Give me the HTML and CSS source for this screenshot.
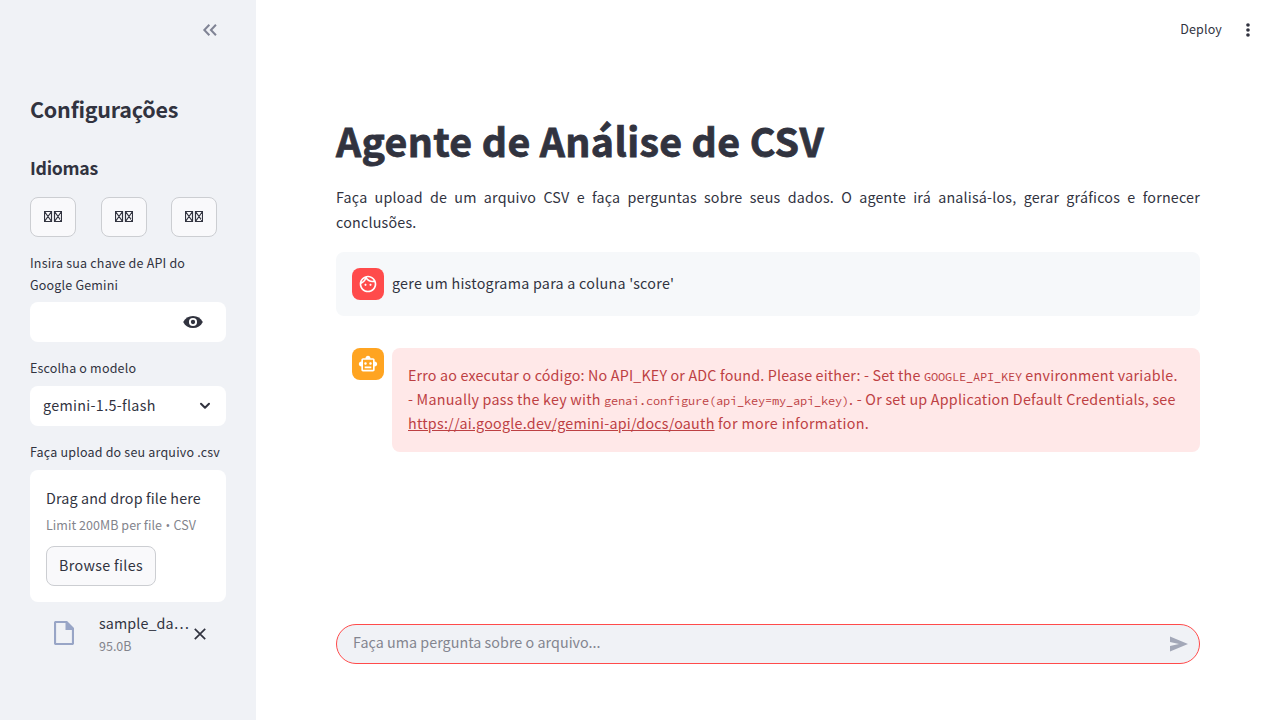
FILE: index.html
```html
<!DOCTYPE html>
<html lang="pt-BR">
<head>
<meta charset="utf-8">
<title>Agente de Análise de CSV</title>
<link rel="stylesheet" href="styles.css">
</head>
<body>
<div class="app">
  <aside class="sidebar">
    <div class="sidebar-header">
      <svg class="collapse" width="22" height="22" viewBox="0 0 24 24" fill="none" stroke="currentColor" stroke-width="2.200"><path d="M11.300 6.200L5.800 12l5.500 5.800M18.500 6.200L13 12l5.500 5.800"/></svg>
    </div>
    <h2 class="side-title">Configurações</h2>
    <h3 class="side-subtitle">Idiomas</h3>
    <div class="langs">
      <button class="btn lang" aria-label="Português"><svg width="18" height="11" viewBox="0 0 18 11" fill="none" stroke="currentColor" stroke-width="1.200"><path d="M.5.500h7v10h-7zM.5.500l7 10M7.500.500l-7 10M10.500.500h7v10h-7zM10.500.500l7 10M17.500.500l-7 10"/></svg></button>
      <button class="btn lang" aria-label="English"><svg width="18" height="11" viewBox="0 0 18 11" fill="none" stroke="currentColor" stroke-width="1.200"><path d="M.5.500h7v10h-7zM.5.500l7 10M7.500.500l-7 10M10.500.500h7v10h-7zM10.500.500l7 10M17.500.500l-7 10"/></svg></button>
      <button class="btn lang" aria-label="Español"><svg width="18" height="11" viewBox="0 0 18 11" fill="none" stroke="currentColor" stroke-width="1.200"><path d="M.5.500h7v10h-7zM.5.500l7 10M7.500.500l-7 10M10.500.500h7v10h-7zM10.500.500l7 10M17.500.500l-7 10"/></svg></button>
    </div>
    <label class="label label-key">Insira sua chave de API do<br>Google Gemini</label>
    <div class="field field-key">
      <svg width="20" height="20" viewBox="0 0 20 20"><path d="M.2 10C2.200 6 5.500 3.900 10 3.900s7.800 2.100 9.800 6.100c-2 4-5.300 6.100-9.800 6.100S2.200 14 .2 10z" fill="currentColor"/><circle cx="10" cy="10" r="3.100" fill="none" stroke="#fff" stroke-width="1.900"/></svg>
    </div>
    <label class="label label-model">Escolha o modelo</label>
    <div class="field field-model">
      <span class="model">gemini-1.5-flash</span>
      <svg width="12" height="8" viewBox="0 0 12 8" fill="none" stroke="currentColor" stroke-width="2" stroke-linecap="round" stroke-linejoin="round"><path d="M2 1.800l4 4 4-4"/></svg>
    </div>
    <label class="label label-upload">Faça upload do seu arquivo .csv</label>
    <div class="dropzone">
      <div class="drop-title">Drag and drop file here</div>
      <div class="drop-hint">Limit 200MB per file <span class="bullet">•</span> CSV</div>
      <button class="btn browse">Browse files</button>
    </div>
    <div class="file">
      <svg class="file-icon" width="20" height="24" viewBox="0 0 20 24"><path d="M2 1H12.500l6.500 6.500v14.500a1 1 0 0 1-1 1h-16a1 1 0 0 1-1-1v-20a1 1 0 0 1 1-1z" fill="none" stroke="currentColor" stroke-width="2.200"/><path d="M11.500 1h1.500l6 6v2h-7.500z" fill="currentColor"/></svg>
      <div class="file-info">
        <div class="file-name">sample_da…</div>
        <div class="file-size">95.0B</div>
      </div>
      <svg class="file-close" width="12" height="12" viewBox="0 0 12 12" fill="none" stroke="currentColor" stroke-width="1.700"><path d="M.8.800l10.400 10.400M11.200.800L.8 11.200"/></svg>
    </div>
  </aside>
  <main class="main">
    <header class="toolbar">
      <span class="deploy">Deploy</span>
      <svg width="20" height="20" viewBox="0 0 24 24" fill="currentColor"><circle cx="12" cy="6" r="2.200"/><circle cx="12" cy="12" r="2.200"/><circle cx="12" cy="18" r="2.200"/></svg>
    </header>
    <section class="content">
      <h1 class="title">Agente de Análise de CSV</h1>
      <p class="intro">Faça upload de um arquivo CSV e faça perguntas sobre seus dados. O agente irá analisá-los, gerar gráficos e fornecer conclusões.</p>
      <div class="message user">
        <div class="avatar avatar-user"><svg width="20" height="20" viewBox="0 0 24 24" fill="currentColor"><path d="M10.250 13c0 .69-.56 1.250-1.250 1.250S7.750 13.690 7.750 13s.56-1.250 1.250-1.250 1.250.56 1.250 1.250zM15 11.750c-.69 0-1.250.56-1.250 1.250s.56 1.250 1.250 1.250 1.250-.56 1.250-1.250-.56-1.250-1.250-1.250zm7 .25c0 5.520-4.480 10-10 10S2 17.520 2 12 6.480 2 12 2s10 4.480 10 10zM10.660 4.120C12.060 6.440 14.600 8 17.500 8c.46 0 .91-.05 1.340-.12C17.440 5.560 14.900 4 12 4c-.46 0-.91.05-1.340.120zM4.420 9.470c1.710-.97 3.030-2.550 3.660-4.440C6.370 6 5.050 7.580 4.420 9.470zM20 12c0-.78-.12-1.530-.33-2.240-.7.150-1.420.240-2.170.240-3.130 0-5.920-1.440-7.760-3.690C8.690 8.870 6.600 10.880 4 11.860c.010.040 0 .090 0 .140 0 4.410 3.590 8 8 8s8-3.590 8-8z"/></svg></div>
        <div class="message-text">gere um histograma para a coluna 'score'</div>
      </div>
      <div class="message">
        <div class="avatar avatar-bot"><svg width="20" height="20" viewBox="0 0 24 24" fill="currentColor"><path d="M20 9V7c0-1.100-.9-2-2-2h-3c0-1.660-1.340-3-3-3S9 3.340 9 5H6c-1.100 0-2 .9-2 2v2c-1.660 0-3 1.340-3 3s1.340 3 3 3v4c0 1.100.9 2 2 2h12c1.100 0 2-.9 2-2v-4c1.660 0 3-1.340 3-3s-1.340-3-3-3zm-2 10H6V7h12v12zm-9-6c-.83 0-1.500-.67-1.500-1.500S8.170 10 9 10s1.500.67 1.500 1.500S9.830 13 9 13zm7.500-1.500c0 .83-.67 1.500-1.500 1.500s-1.500-.67-1.500-1.500.67-1.500 1.500-1.500 1.500.67 1.500 1.500zM8 15h8v2H8v-2z"/></svg></div>
        <div class="alert">
          <div class="line line-first">Erro ao executar o código: No API_KEY or ADC found. Please either: - Set the <code>GOOGLE_API_KEY</code> <span class="wide">environment variable.</span></div>
          <div class="line">- Manually pass the key with <code>genai.configure(api_key=my_api_key)</code>. - Or set up Application Default Credentials, see</div>
          <div class="line"><a class="link">https://ai.google.dev/gemini-api/docs/oauth</a> <span class="wider">for more information.</span></div>
        </div>
      </div>
    </section>
    <footer class="chat">
      <span class="placeholder">Faça uma pergunta sobre o arquivo...</span>
      <svg width="20" height="20" viewBox="0 0 20 20" fill="currentColor"><path d="M1 2.500L19 10 1 17.500V12l9-2-9-2z"/></svg>
    </footer>
  </main>
</div>
</body>
</html>
```
FILE: styles.css
```css
* { box-sizing: border-box; }
body {
  margin: 0;
  font-family: "Source Sans Pro", "Noto Sans CJK SC", sans-serif;
  font-size: 14.3px;
  color: #31333f;
  background: #fff;
}
h1, h2, h3, p { margin: 0; }
svg { flex: none; display: block; }
.app { display: flex; width: 1280px; height: 720px; overflow: hidden; }
.sidebar { width: 256px; padding: 0 30px; background: #f0f2f6; white-space: nowrap; }
.sidebar-header { height: 60px; display: flex; align-items: center; justify-content: flex-end; padding-right: 5px; color: #808495; }
.side-title { margin-top: 31px; font-size: 21.500px; line-height: 36px; font-weight: 600; letter-spacing: -.23px; }
.side-subtitle { margin-top: 28px; font-size: 17.700px; line-height: 24px; font-weight: 600; letter-spacing: -.3px; }
.langs { display: flex; justify-content: space-between; padding-right: 9px; margin-top: 18px; }
.btn { display: flex; align-items: center; justify-content: center; height: 40px; border: 1px solid #ccced2; border-radius: 8px; background: #f9f9fb; font: inherit; color: inherit; padding: 0 12px; }
.lang { width: 46px; padding-bottom: 1px; }
.label { display: block; font-size: 12.500px; line-height: 22px; }
.label-key { margin-top: 15px; letter-spacing: .19px; }
.label-model { margin-top: 15px; letter-spacing: .19px; }
.label-upload { margin-top: 15px; letter-spacing: .19px; }
.field { display: flex; align-items: center; height: 40px; border-radius: 8px; background: #fff; }
.field-key { margin-top: 6px; justify-content: flex-end; padding-right: 23px; }
.field-model { margin-top: 7px; justify-content: space-between; padding: 0 15px 0 13px; }
.model { padding-bottom: 4px; letter-spacing: .33px; }
.dropzone { margin-top: 7px; height: 132px; padding: 15px 16px 16px; background: #fff; border-radius: 8px; }
.drop-title { line-height: 26px; letter-spacing: .13px; }
.drop-hint { margin-top: 3px; font-size: 12.500px; line-height: 21px; color: #83848c; letter-spacing: .05px; }
.bullet { font-family: "Open Sans", sans-serif; line-height: 1; margin: 0 .5px; }
.browse { margin-top: 11px; width: 110px; padding-bottom: 4px; letter-spacing: .33px; }
.file { display: flex; align-items: center; height: 64px; padding: 0 20px 0 25px; }
.file-icon { color: #98a5c6; margin: -3px 0 0 -1px; }
.file-info { margin-left: 25px; width: 92px; }
.file-name { line-height: 22px; letter-spacing: .1px; }
.file-size { font-size: 12.500px; line-height: 23px; color: #83848c; }
.file-close { margin-left: 3px; }
.main { flex: 1; display: flex; flex-direction: column; }
.toolbar { height: 60px; display: flex; align-items: center; justify-content: flex-end; gap: 16px; padding-right: 22px; font-size: 12.500px; }
.deploy { padding-bottom: 4px; letter-spacing: .15px; }
.content { flex: 1; padding: 53px 80px 0; }
.title { font-size: 39.300px; line-height: 53px; font-weight: 700; white-space: nowrap; letter-spacing: .33px; -webkit-text-stroke: .8px #31333f; }
.intro { margin-top: 18px; line-height: 25px; text-align: justify; letter-spacing: .2px; }
.message { display: flex; gap: 8px; padding: 16px 0 16px 16px; border-radius: 8px; }
.user { margin-top: 18px; height: 64px; background: #f6f8fa; margin-bottom: 16px; }
.avatar { flex: none; display: flex; align-items: center; justify-content: center; width: 32px; height: 32px; border-radius: 8px; color: #fff; }
.avatar-user { background: #ff4b4b; }
.avatar-bot { background: #ffa421; }
.message-text { line-height: 30px; letter-spacing: .26px; }
.alert { flex: 1; padding: 15px 16px 17px; background: #ffe8e8; border-radius: 8px; color: #bd4043; }
.line { line-height: 24px; height: 24px; white-space: nowrap; letter-spacing: .23px; }
.line-first { letter-spacing: .17px; }
.wide { letter-spacing: .27px; }
.wider { letter-spacing: .37px; }
code { font-family: "Source Code Pro", "Noto Sans Mono CJK SC", "Liberation Mono", monospace; font-size: 12px; letter-spacing: -.2px; }
.link { text-decoration: underline; letter-spacing: .24px; }
.chat { display: flex; align-items: center; justify-content: space-between; height: 40px; margin: 0 80px 56px; padding: 0 10px 0 16px; border: 1px solid #ff4b4b; border-radius: 20px; background: #f0f2f6; color: #a3a8b8; }
.placeholder { color: #83858f; letter-spacing: .04px; padding-bottom: 5px; }
```
